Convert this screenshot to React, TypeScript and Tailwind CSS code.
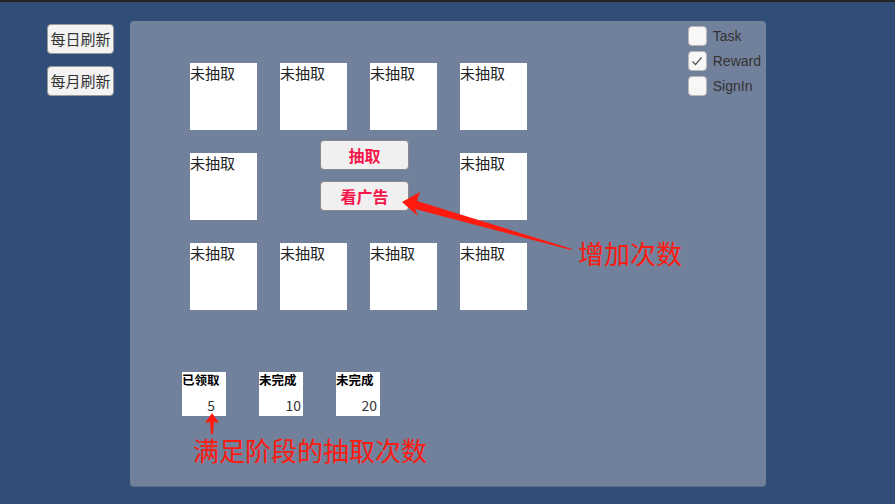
const cjk = { fontFamily: '"Noto Sans CJK SC", "Noto Sans", sans-serif' };

const Slot = () => (
  <div className="h-[67px] w-[67px] bg-white text-[15px] leading-[19px] text-[#222]" style={cjk}>
    未抽取
  </div>
);

const Stage = ({ label, count, pr }: { label: string; count: number; pr: string }) => (
  <div className="flex h-[44px] w-[44px] flex-col bg-white" style={cjk}>
    <span className="text-[12.5px] font-bold leading-[16px] text-black">{label}</span>
    <span className={`mt-auto pb-[2px] text-right text-[14px] leading-[18px] text-[#333] ${pr}`}>{count}</span>
  </div>
);

const Check = ({ label, checked }: { label: string; checked?: boolean }) => (
  <div className="flex items-center gap-[6px]">
    <div className="flex h-[20px] w-[19px] items-center justify-center rounded-[4px] border border-[#b8b8b8] bg-[#f7f7f7]">
      {checked && (
        <svg width="12" height="12" viewBox="0 0 12 12">
          <path d="M1.5 6.5 L4.5 9.5 L10.5 2.5" fill="none" stroke="#555" strokeWidth="1.2" />
        </svg>
      )}
    </div>
    <span className="text-[14px] leading-[18px] text-[#333]" style={{ fontFamily: '"Liberation Sans", Arial, sans-serif' }}>
      {label}
    </span>
  </div>
);

const SideButton = ({ text }: { text: string }) => (
  <button
    className="flex h-[30px] w-[67px] items-center justify-center rounded-[4px] border border-[#9a9a9a] bg-[#f3f3f3] text-[15px] text-[#333]"
    style={cjk}
  >
    {text}
  </button>
);

const RedButton = ({ text }: { text: string }) => (
  <button
    className="flex h-[30px] w-[89px] items-center justify-center rounded-[4px] border border-[#8a8a8a] bg-[#f0f0f0] text-[16px] font-bold text-[#f5164a]"
    style={cjk}
  >
    {text}
  </button>
);

export default function App() {
  return (
    <div className="h-[504px] w-[895px] overflow-hidden border-t-2 border-[#252525] bg-[#304e78]">
      <div className="flex">
        <div className="flex flex-col gap-[12px] pl-[47px] pt-[22px]">
          <SideButton text="每日刷新" />
          <SideButton text="每月刷新" />
        </div>

        <div className="relative ml-[16px] mt-[19px] flex h-[466px] w-[636px] rounded-[4px] border-b border-[#5c6a84] bg-[#72819b]">
          <div className="flex flex-col">
            <div className="grid grid-cols-[67px_67px_67px_67px] gap-x-[23px] gap-y-[23px] pl-[60px] pt-[42px]">
              <Slot />
              <Slot />
              <Slot />
              <Slot />
              <Slot />
              <div className="col-span-2 -mt-[13px] flex flex-col gap-[11px] pl-[40px]">
                <RedButton text="抽取" />
                <RedButton text="看广告" />
              </div>
              <Slot />
              <Slot />
              <Slot />
              <Slot />
              <Slot />
            </div>

            <div className="mt-[62px] flex gap-[33px] pl-[52px]">
              <Stage label="已领取" count={5} pr="pr-[11px]" />
              <Stage label="未完成" count={10} pr="pr-[2px]" />
              <Stage label="未完成" count={20} pr="pr-[3px]" />
            </div>
          </div>

          <div className="ml-auto mr-[5px] flex flex-col gap-[5px] pt-[5px]">
            <Check label="Task" />
            <Check label="Reward" checked />
            <Check label="SignIn" />
          </div>

          {/* annotations */}
          <svg className="pointer-events-none absolute left-0 top-0" width="636" height="466">
            <polygon points="272,181 290,171 287,180 442,228 441,229 285,188 288,195" fill="#ff1a10" />
            <polygon points="82,392 89,402 84,401 83,413 81,413 80,401 75,402" fill="#ff1a10" />
          </svg>
          <span
            className="absolute left-[448px] top-[216px] text-[26px] leading-[32px] text-[#ff1a10]"
            style={cjk}
          >
            增加次数
          </span>
          <span
            className="absolute left-[63px] top-[413px] text-[26px] leading-[32px] text-[#ff1a10]"
            style={cjk}
          >
            满足阶段的抽取次数
          </span>
        </div>
      </div>
    </div>
  );
}
